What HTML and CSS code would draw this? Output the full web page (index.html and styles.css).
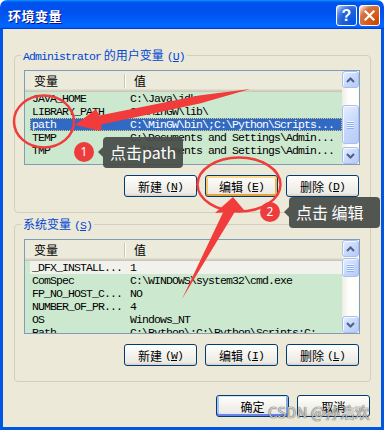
FILE: index.html
```html
<!DOCTYPE html>
<html lang="zh-CN">
<head>
<meta charset="utf-8">
<title>环境变量</title>
<link rel="stylesheet" href="styles.css">
</head>
<body>
<div class="window">
  <div class="titlebar">
    <span class="title">环境变量</span>
    <div class="controls">
      <div class="ctl help">?</div>
      <div class="ctl close"><svg width="13" height="13" viewBox="0 0 13 13"><path d="M2.5 2.5 L10.5 10.5 M10.5 2.5 L2.5 10.5" stroke="#fff" stroke-width="2.2" stroke-linecap="square"/></svg></div>
    </div>
  </div>
  <div class="client">
    <div class="group">
      <div class="legend"><span class="m">Administrator</span> 的用户变量<span class="m mn">(<u>U</u>)</span></div>
      <div class="list">
        <div class="lmain">
          <div class="lhead"><div class="h1">变量</div><div class="sep"></div><div class="h2">值</div></div>
          <div class="rows m">
            <div class="row"><span class="c1">JAVA_HOME</span><span class="c2">C:\Java\jdk</span></div>
            <div class="row"><span class="c1">LIBRARY_PATH</span><span class="c2">C:\MinGW\lib\</span></div>
            <div class="row sel"><span class="c1">path</span><span class="c2">C:\MinGW\bin\;C:\Python\Scripts...</span></div>
            <div class="row"><span class="c1">TEMP</span><span class="c2">C:\Documents and Settings\Admin...</span></div>
            <div class="row"><span class="c1">TMP</span><span class="c2">C:\Documents and Settings\Admin...</span></div>
          </div>
        </div>
        <div class="sb">
          <div class="sbtn"><svg width="9" height="6" viewBox="0 0 9 6"><path d="M1 5 L4.5 1.5 L8 5" fill="none" stroke="#4D6185" stroke-width="2"/></svg></div>
          <div class="track"><div class="thumb" style="margin-top:17px;height:39px"><div class="grip"></div></div></div>
          <div class="sbtn"><svg width="9" height="6" viewBox="0 0 9 6"><path d="M1 1 L4.5 4.5 L8 1" fill="none" stroke="#4D6185" stroke-width="2"/></svg></div>
        </div>
      </div>
      <div class="btns">
        <div class="btn"><span>新建</span><span class="m mn">(<u>N</u>)</span></div>
        <div class="btn focus"><span>编辑</span><span class="m mn">(<u>E</u>)</span></div>
        <div class="btn"><span>删除</span><span class="m mn">(<u>D</u>)</span></div>
      </div>
    </div>
    <div class="group">
      <div class="legend">系统变量<span class="m mn">(<u>S</u>)</span></div>
      <div class="list">
        <div class="lmain">
          <div class="lhead"><div class="h1">变量</div><div class="sep"></div><div class="h2">值</div></div>
          <div class="rows m">
            <div class="row inact"><span class="c1">_DFX_INSTALL...</span><span class="c2">1</span></div>
            <div class="row"><span class="c1">ComSpec</span><span class="c2">C:\WINDOWS\system32\cmd.exe</span></div>
            <div class="row"><span class="c1">FP_NO_HOST_C...</span><span class="c2">NO</span></div>
            <div class="row"><span class="c1">NUMBER_OF_PR...</span><span class="c2">4</span></div>
            <div class="row"><span class="c1">OS</span><span class="c2">Windows_NT</span></div>
            <div class="row"><span class="c1">Path</span><span class="c2">C:\Python\;C:\Python\Scripts;C:...</span></div>
          </div>
        </div>
        <div class="sb">
          <div class="sbtn"><svg width="9" height="6" viewBox="0 0 9 6"><path d="M1 5 L4.5 1.5 L8 5" fill="none" stroke="#4D6185" stroke-width="2"/></svg></div>
          <div class="track"><div class="thumb" style="margin-top:1px;height:19px"><div class="grip"></div></div></div>
          <div class="sbtn"><svg width="9" height="6" viewBox="0 0 9 6"><path d="M1 1 L4.5 4.5 L8 1" fill="none" stroke="#4D6185" stroke-width="2"/></svg></div>
        </div>
      </div>
      <div class="btns">
        <div class="btn"><span>新建</span><span class="m mn">(<u>W</u>)</span></div>
        <div class="btn"><span>编辑</span><span class="m mn">(<u>I</u>)</span></div>
        <div class="btn"><span>删除</span><span class="m mn">(<u>L</u>)</span></div>
      </div>
    </div>
    <div class="footer">
      <div class="btn default">确定</div>
      <div class="btn">取消</div>
    </div>
  </div>

  <svg class="marks" width="384" height="430" viewBox="0 0 384 430">
    <ellipse cx="44" cy="121.5" rx="30" ry="26" fill="none" stroke="#F23B3B" stroke-width="2.5"/>
    <polygon points="75,125 96,109 99.5,115.5 199,95.4 250,89 200.8,103.2 101.5,124.5 101,131" fill="#F23B3B"/>
    <ellipse cx="239" cy="184.5" rx="41.5" ry="27" fill="none" stroke="#F23B3B" stroke-width="2.5"/>
    <polygon points="233,197 244,210 235,211.5 182,299 223,212.5 215,213" fill="#F23B3B"/>
  </svg>
  <div class="num n1">1</div>
  <div class="tip t1">点击path</div>
  <div class="num n2">2</div>
  <div class="tip t2">点击 编辑</div>
  <div class="wm">CSDN @孙浩欢</div>
</div>
</body>
</html>
```
FILE: styles.css
```css
* { box-sizing: border-box; }
html, body { margin: 0; padding: 0; background: #fff; }
body {
  font-family: "Noto Sans CJK SC", "Noto Sans", sans-serif;
  font-size: 12px;
  color: #000;
}
.window {
  position: relative;
  width: 384px;
  height: 430px;
  display: flex;
  flex-direction: column;
}
.titlebar {
  height: 29px;
  flex: none;
  display: flex;
  align-items: center;
  padding: 2px 4px 0 8px;
  border-radius: 7px 7px 0 0;
  background: linear-gradient(180deg, #0997ff, #0053ee 8%, #0050ee 40%, #0066ff 88%, #0066ff 93%, #005bff 95%, #003dd7 96%, #003dd7);
}
.title {
  color: #fff;
  font-weight: bold;
  font-size: 13px;
  line-height: 16px;
  letter-spacing: 0.5px;
  text-shadow: 1px 1px #0f1089;
}
.controls { margin-left: auto; display: flex; gap: 2px; }
.ctl {
  width: 21px;
  height: 21px;
  border: 1px solid #fff;
  border-radius: 3px;
  display: flex;
  align-items: center;
  justify-content: center;
  color: #fff;
}
.help {
  background: radial-gradient(circle at 90% 90%, #0054e9 0, #2263d5 55%, #4479e4 70%, #a3bbec 90%, #fff 100%);
  font: bold 16px "Liberation Sans", sans-serif;
}
.close {
  background: radial-gradient(circle at 90% 90%, #cc4600 0, #dc6527 55%, #cd7546 70%, #ffccb2 90%, #fff 100%);
}
.client {
  flex: 1;
  background: #ECE9D8;
  border: 3px solid #0055E5;
  border-top: 0;
  padding: 26px 10px 0 11px;
  display: flex;
  flex-direction: column;
}
.m {
  font-family: "Liberation Mono", monospace;
  font-size: 11.5px;
  letter-spacing: -0.9px;
}
.mn { margin-left: 3px; }
.group {
  border: 1px solid #D0D0BF;
  border-radius: 4px;
  padding: 0 10px 15px 9px;
}
.group + .group { margin-top: 11px; }
.legend {
  width: fit-content;
  height: 14px;
  line-height: 14px;
  margin: -8px 0 0 -3px;
  padding: 0 2px;
  background: #ECE9D8;
  color: #0046D5;
  white-space: nowrap;
}
.list {
  margin-top: 8px;
  height: 95px;
  border: 1px solid #7F9DB9;
  background: #CCE8CF;
  display: flex;
}
.lmain {
  flex: 1;
  min-width: 0;
  overflow: hidden;
  display: flex;
  flex-direction: column;
}
.lhead {
  height: 21px;
  flex: none;
  display: flex;
  padding-top: 1px;
  background: #EBEADB;
  box-shadow: inset 0 -1px #CBC7B8, inset 0 -2px #D6D2C2, inset 0 -3px #E2DECD;
}
.h1 { width: 99px; padding-left: 9px; line-height: 18px; }
.sep {
  width: 2px;
  height: 14px;
  margin-top: 2px;
  border-left: 1px solid #C7C5B2;
  border-right: 1px solid #fff;
}
.h2 { padding-left: 8px; line-height: 18px; }
.rows { flex: 1; overflow: hidden; }
.row {
  height: 13px;
  line-height: 13px;
  margin-left: 5px;
  display: flex;
  white-space: nowrap;
}
.c1 { width: 94px; flex: none; padding-left: 2px; }
.c2 { padding-left: 6px; }
.row.sel {
  background: #316AC5;
  color: #fff;
  outline: 1px dotted #E9C46A;
  outline-offset: -1px;
}
.row.inact { background: #F1F2EC; }
.sb {
  width: 17px;
  flex: none;
  display: flex;
  flex-direction: column;
  background: linear-gradient(90deg, #EEEDE5, #FEFEFB 40%, #FDFDFA);
}
.sbtn, .thumb {
  border: 1px solid #A9BFEF;
  border-radius: 3px;
  background: linear-gradient(135deg, #E6EEFF, #C6D7FC 55%, #B7CBF7);
  box-shadow: inset 1px 1px #F4F8FF;
  display: flex;
  align-items: center;
  justify-content: center;
}
.sbtn { height: 17px; flex: none; }
.track { flex: 1; display: flex; flex-direction: column; }
.grip {
  width: 7px;
  height: 8px;
  background: repeating-linear-gradient(180deg, #EEF4FE 0 1px, #8CB0F8 1px 2px);
}
.btns {
  display: flex;
  justify-content: flex-end;
  gap: 8px;
  margin: 10px 1px 0 0;
}
.btn {
  width: 73px;
  height: 22px;
  border: 1px solid #003C74;
  border-radius: 3px;
  background: linear-gradient(180deg, #ffffff, #F4F3EE 45%, #ECEBE6 86%, #D6D0C5);
  display: flex;
  align-items: center;
  justify-content: center;
  white-space: nowrap;
}
.btn.focus {
  box-shadow: inset 0 2px #FFDA8C, inset 0 -2px #E5A43C, inset 2px 0 #F9C66B, inset -2px 0 #F2B54A;
}
.btn.default {
  box-shadow: inset 0 1px #CEE7FF, inset 0 -2px #6982EE, inset 2px 0 #A8C4F4, inset -2px 0 #89ADE4;
}
.footer {
  display: flex;
  justify-content: flex-end;
  gap: 8px;
  margin: 13px 1px 0 0;
}
.marks {
  position: absolute;
  left: 0;
  top: 0;
  pointer-events: none;
}
.num {
  position: absolute;
  width: 20px;
  height: 20px;
  border-radius: 50%;
  background: #EE3B3B;
  color: #fff;
  font: 12px/20px "Noto Sans", sans-serif;
  text-align: center;
}
.n1 { left: 74px; top: 142px; }
.n2 { left: 260px; top: 202px; }
.tip {
  position: absolute;
  height: 31px;
  padding-left: 7px;
  background: rgba(72, 76, 72, 0.94);
  color: #fff;
  font-size: 16px;
  line-height: 31px;
  border-radius: 4px;
  white-space: nowrap;
}
.tip::before {
  content: "";
  position: absolute;
  left: -5px;
  top: 10px;
  border-style: solid;
  border-width: 5px 5px 5px 0;
  border-color: transparent rgba(72, 76, 72, 0.94) transparent transparent;
}
.t1 { left: 103px; top: 137px; width: 80px; }
.t2 { left: 289px; top: 197px; width: 91px; }
.wm {
  position: absolute;
  left: 268px;
  top: 403px;
  font-size: 15px;
  line-height: 18px;
  color: rgba(255, 255, 255, 0.75);
  text-shadow: 0 0 1px rgba(0, 0, 0, 0.7), 0 0 1px rgba(0, 0, 0, 0.5);
  white-space: nowrap;
}
```
